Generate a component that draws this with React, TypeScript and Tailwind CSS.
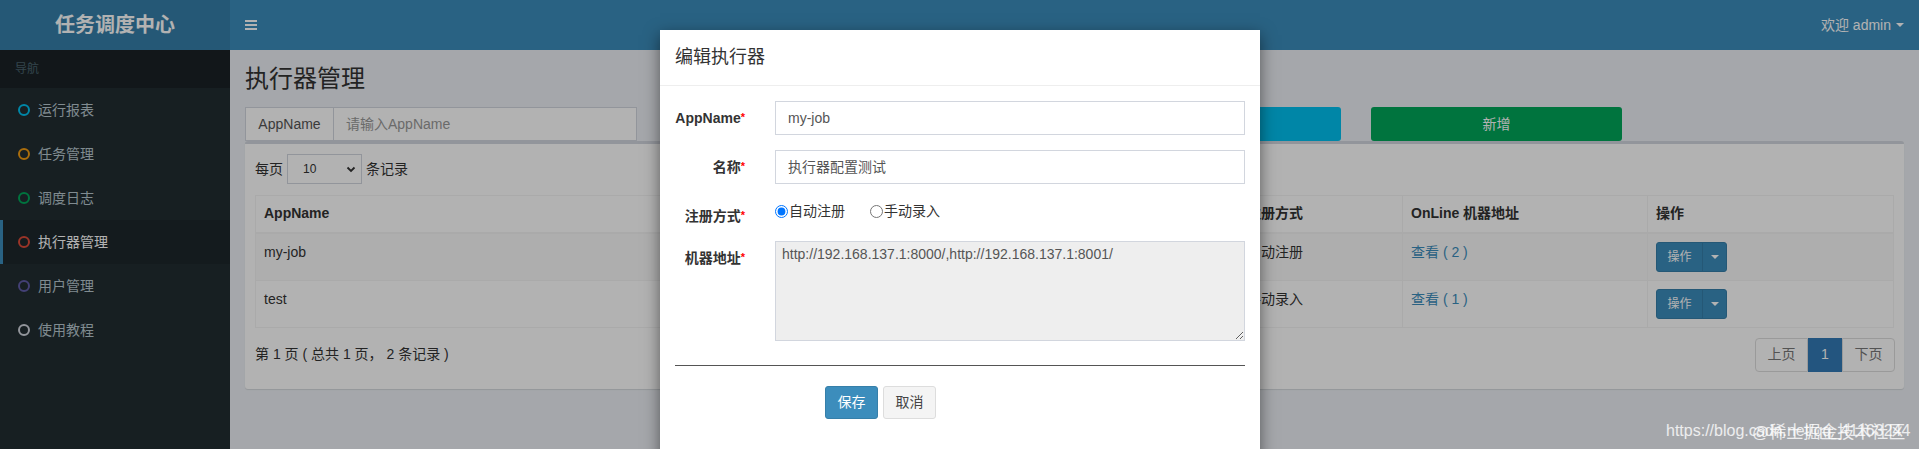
import React from "react";

const menu = [
  { label: "运行报表", color: "border-[#00c0ef]" },
  { label: "任务管理", color: "border-[#f39c12]" },
  { label: "调度日志", color: "border-[#00a65a]" },
  { label: "执行器管理", color: "border-[#dd4b39]", active: true },
  { label: "用户管理", color: "border-[#605ca8]" },
  { label: "使用教程", color: "border-[#d2d6de]" },
];

function OpButton() {
  return (
    <div className="inline-flex h-[30px] rounded-[3px] bg-[#3c8dbc] border border-[#367fa9] text-white text-[12px]">
      <div className="w-[45px] flex items-center justify-center">操作</div>
      <div className="w-[24px] flex items-center justify-center border-l border-[#367fa9]">
        <span className="block w-0 h-0 border-l-[4px] border-r-[4px] border-t-[4px] border-l-transparent border-r-transparent border-t-white" />
      </div>
    </div>
  );
}

function Req() {
  return <span className="text-[#ff0000] text-[11px] align-top relative top-[-1px]">*</span>;
}

export default function App() {
  return (
    <div className="relative w-full h-[449px] overflow-hidden bg-[#ecf0f5] text-[14px] text-[#333] font-['Liberation_Sans','Noto_Sans_CJK_SC',sans-serif]">
      {/* header */}
      <header className="flex h-[50px]">
        <div className="w-[230px] bg-[#367fa9] flex items-center justify-center text-white text-[20px] font-bold">
          任务调度中心
        </div>
        <div className="flex-1 bg-[#3c8dbc] flex items-center justify-between pl-[15px] pr-[15px]">
          <div className="flex flex-col gap-[2px] w-[12px]">
            <span className="block h-[2px] bg-white" />
            <span className="block h-[2px] bg-white" />
            <span className="block h-[2px] bg-white" />
          </div>
          <div className="flex items-center text-white text-[14px]">
            <span>欢迎 admin</span>
            <span className="ml-[5px] block w-0 h-0 border-l-[4px] border-r-[4px] border-t-[4px] border-l-transparent border-r-transparent border-t-white" />
          </div>
        </div>
      </header>

      <div className="flex h-[399px]">
        {/* sidebar */}
        <aside className="w-[230px] bg-[#222d32] shrink-0">
          <div className="h-[38px] bg-[#1a2226] text-[#4b646f] text-[12px] pl-[15px] flex items-center">导航</div>
          {menu.map((m) => (
            <div
              key={m.label}
              className={
                "h-[44px] flex items-center pl-[15px] border-l-[3px] " +
                (m.active ? "border-l-[#3c8dbc] bg-[#1e282c] text-white" : "border-l-transparent text-[#b8c7ce]")
              }
            >
              <span className={"block w-[12px] h-[12px] rounded-full border-[2.5px] " + m.color} />
              <span className="ml-[8px]">{m.label}</span>
            </div>
          ))}
        </aside>

        {/* content */}
        <main className="flex-1 px-[15px]">
          <h1 className="pt-[15px] text-[24px] leading-[28px] text-[#333]">执行器管理</h1>
          <div className="mt-[14px] flex gap-[30px] h-[34px]">
            <div className="w-[392px] flex border border-[#d2d6de] bg-white">
              <div className="w-[88px] flex items-center justify-center border-r border-[#d2d6de] text-[#555]">AppName</div>
              <div className="flex-1 flex items-center px-[12px] text-[#999]">请输入AppName</div>
            </div>
            <div className="w-[392px] flex border border-[#d2d6de] bg-white">
              <div className="w-[60px] flex items-center justify-center border-r border-[#d2d6de] text-[#555]">名称</div>
              <div className="flex-1 flex items-center px-[12px] text-[#999]">请输入名称</div>
            </div>
            <div className="w-[252px] rounded-[3px] bg-[#00c0ef] text-white flex items-center justify-center">搜索</div>
            <div className="w-[251px] rounded-[3px] bg-[#00a65a] text-white flex items-center justify-center">新增</div>
          </div>

          <div className="bg-white border-t-[3px] border-[#d2d6de] rounded-[3px] shadow-[0_1px_1px_rgba(0,0,0,0.1)] px-[10px] pt-[10px] pb-[17px]">
            <div className="flex items-center h-[30px]">
              <span>每页</span>
              <div className="ml-[4px] w-[75px] h-[30px] border border-[#d2d6de] flex items-center justify-between pl-[15px] pr-[4px] text-[12px] text-[#333]">
                <span>10</span>
                <svg width="12" height="12" viewBox="0 0 12 12">
                  <path d="M2.5 4.5 L6 8 L9.5 4.5" fill="none" stroke="#333" strokeWidth="1.8" />
                </svg>
              </div>
              <span className="ml-[4px]">条记录</span>
            </div>

            <table className="mt-[11px] w-full table-fixed border-collapse">
              <colgroup>
                <col className="w-[445px]" />
                <col className="w-[538px]" />
                <col className="w-[164px]" />
                <col className="w-[245px]" />
                <col />
              </colgroup>
              <thead>
                <tr className="h-[37px]">
                  {["AppName", "名称", "注册方式", "OnLine 机器地址", "操作"].map((h) => (
                    <th key={h} className="text-left font-bold px-[8px] border border-[#f4f4f4] border-b-2">
                      {h}
                    </th>
                  ))}
                </tr>
              </thead>
              <tbody>
                <tr className="h-[47px] bg-[#f9f9f9]">
                  <td className="px-[8px] py-[8px] align-top border border-[#f4f4f4]">my-job</td>
                  <td className="px-[8px] py-[8px] align-top border border-[#f4f4f4]">执行器配置测试</td>
                  <td className="px-[8px] py-[8px] align-top border border-[#f4f4f4]">自动注册</td>
                  <td className="px-[8px] py-[8px] align-top border border-[#f4f4f4] text-[#3c8dbc]">查看 ( 2 )</td>
                  <td className="px-[8px] py-[8px] align-top border border-[#f4f4f4]"><OpButton /></td>
                </tr>
                <tr className="h-[47px]">
                  <td className="px-[8px] py-[8px] align-top border border-[#f4f4f4]">test</td>
                  <td className="px-[8px] py-[8px] align-top border border-[#f4f4f4]">test</td>
                  <td className="px-[8px] py-[8px] align-top border border-[#f4f4f4]">手动录入</td>
                  <td className="px-[8px] py-[8px] align-top border border-[#f4f4f4] text-[#3c8dbc]">查看 ( 1 )</td>
                  <td className="px-[8px] py-[8px] align-top border border-[#f4f4f4]"><OpButton /></td>
                </tr>
              </tbody>
            </table>

            <div className="mt-[10px] flex items-center justify-between">
              <span>第 1 页 ( 总共 1 页， 2 条记录 )</span>
              <div className="flex h-[34px] mr-[-1px]">
                <div className="w-[53px] flex items-center justify-center border border-[#ddd] rounded-l-[4px] text-[#777]">上页</div>
                <div className="w-[34px] flex items-center justify-center bg-[#337ab7] border border-[#337ab7] text-white">1</div>
                <div className="w-[53px] flex items-center justify-center border border-[#ddd] rounded-r-[4px] text-[#777]">下页</div>
              </div>
            </div>
          </div>
        </main>
      </div>

      {/* backdrop */}
      <div className="absolute inset-0 bg-black/30" />

      {/* modal */}
      <div className="absolute left-[660px] top-[30px] w-[600px] h-[440px] bg-white shadow-[0_5px_15px_rgba(0,0,0,0.5)]">
        <div className="h-[56px] px-[15px] border-b border-[#eee] flex items-center text-[18px] text-[#333]">编辑执行器</div>
        <div className="p-[15px]">
          <div className="flex mb-[15px]">
            <label className="w-[70px] shrink-0 text-right font-bold pt-[7px] leading-[20px] whitespace-nowrap">AppName<Req /></label>
            <div className="ml-[30px] w-[470px] h-[34px] border border-[#d2d6de] px-[12px] flex items-center text-[#555]">my-job</div>
          </div>
          <div className="flex mb-[15px]">
            <label className="w-[70px] shrink-0 text-right font-bold pt-[7px] leading-[20px] whitespace-nowrap">名称<Req /></label>
            <div className="ml-[30px] w-[470px] h-[34px] border border-[#d2d6de] px-[12px] flex items-center text-[#555]">执行器配置测试</div>
          </div>
          <div className="flex mb-[15px] h-[27px]">
            <label className="w-[70px] shrink-0 text-right font-bold pt-[7px] leading-[20px] whitespace-nowrap">注册方式<Req /></label>
            <div className="ml-[30px] flex items-start pt-[2px] leading-[20px] text-[#333]">
              <label className="flex items-center">
                <input type="radio" name="r" defaultChecked className="m-0 w-[13px] h-[13px]" />
                <span className="ml-[1px]">自动注册</span>
              </label>
              <label className="flex items-center ml-[25px]">
                <input type="radio" name="r" className="m-0 w-[13px] h-[13px]" />
                <span className="ml-[1px]">手动录入</span>
              </label>
            </div>
          </div>
          <div className="flex">
            <label className="w-[70px] shrink-0 text-right font-bold pt-[7px] leading-[20px] whitespace-nowrap">机器地址<Req /></label>
            <textarea
              readOnly
              defaultValue="http://192.168.137.1:8000/,http://192.168.137.1:8001/"
              className="ml-[30px] w-[470px] h-[100px] border border-[#d2d6de] bg-[#eee] px-[6px] py-[4px] leading-[16px] text-[14px] text-[#555] outline-none"
            />
          </div>
          <div className="mt-[24px] h-px bg-[#555]" />
          <div className="mt-[20px] ml-[150px] flex gap-[5px]">
            <div className="w-[53px] h-[33px] rounded-[3px] bg-[#3c8dbc] border border-[#367fa9] text-white flex items-center justify-center">保存</div>
            <div className="w-[53px] h-[33px] rounded-[3px] bg-[#f4f4f4] border border-[#ddd] text-[#444] flex items-center justify-center">取消</div>
          </div>
        </div>
      </div>

      {/* watermark */}
      <div className="absolute left-[1666px] top-[419px] text-[16px] text-white/80 whitespace-nowrap">https://blog.csdn.net/qq_41163244</div>
      <div className="absolute left-[1752px] top-[420px] text-[17px] text-white/80 whitespace-nowrap">@稀土掘金技术社区</div>
    </div>
  );
}
